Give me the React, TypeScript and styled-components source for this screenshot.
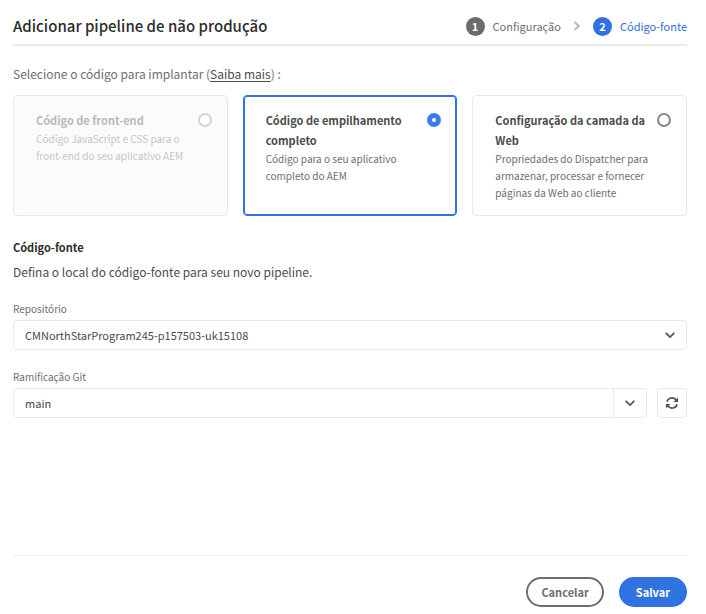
import React, { useState } from "react";
import styled, { createGlobalStyle } from "styled-components";

const GlobalStyle = createGlobalStyle`
  *, *::before, *::after { box-sizing: border-box; }
  body {
    margin: 0;
    background: #fff;
    color: #4b4b4b;
    font-family: "Noto Sans CJK SC", "Noto Sans", sans-serif;
    font-size: 11px;
    line-height: 20px;
  }
  button, input, select { font: inherit; color: inherit; }
`;

const Page = styled.main`
  display: flex;
  flex-direction: column;
  min-height: 100vh;
  padding: 8px 19px 7px 13px;
`;

const Header = styled.header`
  display: flex;
  align-items: center;
  justify-content: space-between;
  height: 38px;
  border-bottom: 2px solid #eaeaea;
`;

const Title = styled.h1`
  margin: 0;
  font-size: 15px;
  line-height: 24px;
  font-weight: 500;
  color: #2c2c2c;
`;

const Steps = styled.ol`
  display: flex;
  align-items: center;
  margin: 0;
  padding: 0;
  list-style: none;
`;

const Step = styled.li<{ $active?: boolean }>`
  display: flex;
  align-items: center;
  gap: 8px;
  color: ${(p) => (p.$active ? "#2f6fdc" : "#6e6e6e")};
`;

const StepNumber = styled.span<{ $active?: boolean }>`
  display: flex;
  align-items: center;
  justify-content: center;
  width: 19px;
  height: 19px;
  border-radius: 50%;
  background: ${(p) => (p.$active ? "#2f72e0" : "#6b6b6b")};
  color: #fff;
  line-height: 19px;
  font-weight: 700;
`;

const StepArrow = styled.svg`
  display: block;
  width: 8px;
  height: 12px;
  margin: 0 12px;
  fill: none;
  stroke: #b9b9b9;
  stroke-width: 2;
`;

const Prompt = styled.p`
  margin: 18px 0 11px;
  font-size: 12px;
  color: #6e6e6e;
`;

const MoreLink = styled.a`
  color: #4b4b4b;
  text-underline-offset: 2px;
`;

const Cards = styled.div`
  display: grid;
  grid-template-columns: repeat(3, 1fr);
  gap: 15px;
`;

const Card = styled.label<{ $selected: boolean; $disabled?: boolean }>`
  display: flex;
  align-items: flex-start;
  min-height: 121px;
  padding: 14px 15px 14px 22px;
  border: 1px solid ${(p) => (p.$selected ? "#2f72e0" : "#e9e9e9")};
  box-shadow: ${(p) => (p.$selected ? "inset 0 0 0 1px #2f72e0" : "none")};
  border-radius: 4px;
  background: ${(p) => (p.$disabled ? "#fbfbfb" : "#fff")};
  color: ${(p) => (p.$disabled ? "#c6c6c6" : "#6e6e6e")};
`;

const CardText = styled.span`
  flex: 1;
  min-width: 0;
`;

const CardTitle = styled.span<{ $disabled?: boolean }>`
  display: block;
  font-weight: 700;
  color: ${(p) => (p.$disabled ? "#b9b9b9" : "#4b4b4b")};
`;

const CardDetail = styled.span`
  display: block;
  padding-right: 8px;
  font-size: 10px;
  line-height: 17px;
`;

const Radio = styled.input`
  appearance: none;
  flex: none;
  width: 14px;
  height: 14px;
  margin: 3px 0 0;
  border: 2px solid #8a8a8a;
  border-radius: 50%;
  background: #fff;
  &:checked { border: 5px solid #3b7de6; }
  &:disabled { border-color: #d3d3d3; }
`;

const SectionTitle = styled.h2`
  margin: 21px 0 0;
  font-size: 11px;
  line-height: 20px;
  font-weight: 700;
  color: #2c2c2c;
`;

const SectionText = styled.p`
  margin: 5px 0 0;
  font-size: 12px;
`;

const Field = styled.div`
  margin-top: 18px;
`;

const FieldLabel = styled.label`
  display: block;
  margin-bottom: 3px;
  font-size: 10px;
  line-height: 17px;
  color: #6e6e6e;
`;

const FieldRow = styled.div`
  display: grid;
  grid-template-columns: 1fr 30px;
  gap: 10px;
`;

const SelectBox = styled.div`
  display: grid;
  align-items: center;
  > * { grid-area: 1 / 1; }
  > svg { justify-self: end; margin-right: 12px; pointer-events: none; }
`;

const Select = styled.select`
  appearance: none;
  width: 100%;
  height: 30px;
  padding: 0 36px 0 11px;
  border: 1px solid #e9e9e9;
  border-radius: 4px;
  background: #fff;
`;

const Combo = styled.div`
  display: flex;
  height: 30px;
  border: 1px solid #e9e9e9;
  border-radius: 4px;
  overflow: hidden;
`;

const ComboInput = styled.input`
  flex: 1;
  min-width: 0;
  padding: 0 11px;
  border: 0;
  background: #fff;
`;

const ComboButton = styled.button`
  display: flex;
  align-items: center;
  justify-content: center;
  width: 33px;
  padding: 0;
  border: 0;
  border-left: 1px solid #e9e9e9;
  background: #fff;
`;

const IconButton = styled.button`
  display: flex;
  align-items: center;
  justify-content: center;
  height: 30px;
  padding: 0;
  border: 1px solid #e9e9e9;
  border-radius: 4px;
  background: #fff;
`;

const Footer = styled.footer`
  display: flex;
  justify-content: flex-end;
  gap: 15px;
  margin-top: auto;
  padding-top: 21px;
  border-top: 1px solid #eeeeee;
`;

const Button = styled.button<{ $primary?: boolean }>`
  height: 30px;
  padding: 0 ${(p) => (p.$primary ? 15 : 13)}px;
  border: 2px solid ${(p) => (p.$primary ? "#2f72e0" : "#6e6e6e")};
  border-radius: 15px;
  background: ${(p) => (p.$primary ? "#2f72e0" : "#fff")};
  color: ${(p) => (p.$primary ? "#fff" : "#6e6e6e")};
  line-height: 20px;
  font-weight: 700;
`;

const Chevron = () => (
  <svg width="10" height="7" viewBox="0 0 10 7" fill="none" stroke="#585858" strokeWidth="1.8" strokeLinecap="round" strokeLinejoin="round" aria-hidden="true">
    <path d="M1.2 1.3 5 5.1 8.8 1.3" />
  </svg>
);

const RefreshIcon = () => (
  <svg width="14" height="14" viewBox="0 0 14 14" aria-hidden="true">
    <g fill="none" stroke="#505050" strokeWidth="1.6">
      <path d="M1.9 5.7A5.2 5.2 0 0 1 11.1 4" />
      <path d="M12.1 8.3A5.2 5.2 0 0 1 2.9 10" />
    </g>
    <path d="M13 1.5V6H8.5z M1 12.5V8h4.5z" fill="#505050" />
  </svg>
);

const options = [
  { id: "front", title: "Código de front-end", detail: "Código JavaScript e CSS para o front-end do seu aplicativo AEM", disabled: true },
  { id: "full", title: "Código de empilhamento completo", detail: "Código para o seu aplicativo completo do AEM" },
  { id: "web", title: "Configuração da camada da Web", detail: "Propriedades do Dispatcher para armazenar, processar e fornecer páginas da Web ao cliente" },
];

export default function App() {
  const [code, setCode] = useState("full");
  const [branch, setBranch] = useState("main");

  return (
    <Page>
      <GlobalStyle />
      <Header>
        <Title>Adicionar pipeline de não produção</Title>
        <Steps>
          <Step>
            <StepNumber>1</StepNumber>Configuração
          </Step>
          <li aria-hidden="true">
            <StepArrow viewBox="0 0 8 12"><path d="M1.5 2 5.7 6 1.5 10" /></StepArrow>
          </li>
          <Step $active aria-current="step">
            <StepNumber $active>2</StepNumber>Código-fonte
          </Step>
        </Steps>
      </Header>

      <Prompt>
        Selecione o código para implantar (<MoreLink href="#">Saiba mais</MoreLink>) :
      </Prompt>
      <Cards role="radiogroup" aria-label="Selecione o código para implantar">
        {options.map((o) => (
          <Card key={o.id} $selected={code === o.id} $disabled={o.disabled}>
            <CardText>
              <CardTitle $disabled={o.disabled}>{o.title}</CardTitle>
              <CardDetail>{o.detail}</CardDetail>
            </CardText>
            <Radio type="radio" name="code" checked={code === o.id} disabled={o.disabled} onChange={() => setCode(o.id)} />
          </Card>
        ))}
      </Cards>

      <SectionTitle>Código-fonte</SectionTitle>
      <SectionText>Defina o local do código-fonte para seu novo pipeline.</SectionText>

      <Field>
        <FieldLabel htmlFor="repository">Repositório</FieldLabel>
        <SelectBox>
          <Select id="repository">
            <option>CMNorthStarProgram245-p157503-uk15108</option>
          </Select>
          <Chevron />
        </SelectBox>
      </Field>
      <Field>
        <FieldLabel htmlFor="branch">Ramificação Git</FieldLabel>
        <FieldRow>
          <Combo>
            <ComboInput id="branch" value={branch} onChange={(e) => setBranch(e.target.value)} />
            <ComboButton type="button" aria-label="Abrir lista"><Chevron /></ComboButton>
          </Combo>
          <IconButton type="button" aria-label="Atualizar"><RefreshIcon /></IconButton>
        </FieldRow>
      </Field>

      <Footer>
        <Button type="button">Cancelar</Button>
        <Button type="button" $primary>Salvar</Button>
      </Footer>
    </Page>
  );
}
